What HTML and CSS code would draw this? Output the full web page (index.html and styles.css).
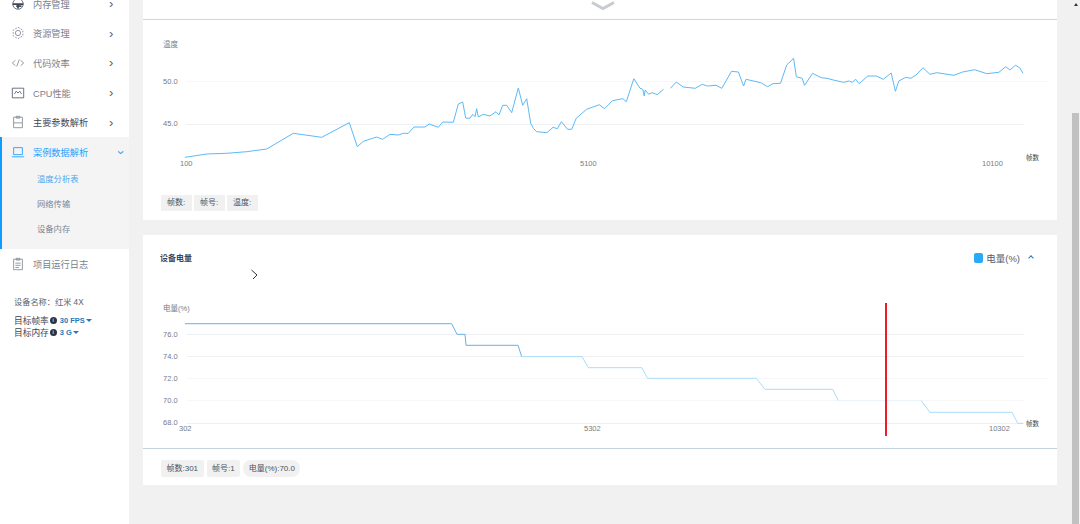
FILE: index.html
```html
<!DOCTYPE html>
<html lang="zh-CN">
<head>
    <meta charset="UTF-8">
    <title>性能报告</title>
    <link rel="stylesheet" href="styles.css">
</head>
<body>
    <div class="app">
        <aside class="sidebar">
            <nav class="nav">
                <div class="nav-item">
                    <svg class="nav-icon" viewBox="0 0 16 16"><circle cx="8" cy="8" r="6"/><path class="icon-bold" d="M2 8h12M6 10.500h6M8 8v5"/></svg>
                    <span class="nav-label">内存管理</span><span class="nav-arrow">›</span>
                </div>
                <div class="nav-item">
                    <svg class="nav-icon nav-icon-light" viewBox="0 0 16 16"><circle cx="8" cy="8" r="3"/><path stroke-dasharray="2 1.500" d="M8 1.500l5.500 3.200v6.600L8 14.500l-5.500-3.200V4.700z"/></svg>
                    <span class="nav-label">资源管理</span><span class="nav-arrow">›</span>
                </div>
                <div class="nav-item">
                    <svg class="nav-icon nav-icon-light" viewBox="0 0 16 16"><path d="M5 5L1.500 8 5 11M11 5l3.500 3L11 11M9.500 4l-3 8"/></svg>
                    <span class="nav-label">代码效率</span><span class="nav-arrow">›</span>
                </div>
                <div class="nav-item">
                    <svg class="nav-icon" viewBox="0 0 16 16"><path d="M1.500 2.500h13v11h-13zM4 9l2-3 2 2 2-2 2 3"/></svg>
                    <span class="nav-label">CPU性能</span><span class="nav-arrow">›</span>
                </div>
                <div class="nav-item">
                    <svg class="nav-icon nav-icon-light" viewBox="0 0 16 16"><path d="M3 2.500h10v12H3zM6 1.500h4v2H6zM3 9h10"/></svg>
                    <span class="nav-label nav-label-dark">主要参数解析</span><span class="nav-arrow">›</span>
                </div>
                <div class="nav-group">
                    <div class="nav-item nav-item-active">
                        <svg class="nav-icon" viewBox="0 0 16 16"><path d="M3 3h10v8H3zM1 13.500h14"/></svg>
                        <span class="nav-label">案例数据解析</span><span class="nav-arrow nav-arrow-open">›</span>
                    </div>
                    <div class="nav-sub nav-sub-active">温度分析表</div>
                    <div class="nav-sub">网络传输</div>
                    <div class="nav-sub">设备内存</div>
                </div>
                <div class="nav-item">
                    <svg class="nav-icon nav-icon-light" viewBox="0 0 16 16"><path d="M3 2.500h10v12H3zM6 1.500h4v2H6zM5 7h6M5 9.500h6M5 12h4"/></svg>
                    <span class="nav-label">项目运行日志</span>
                </div>
            </nav>
            <div class="device">
                <div class="device-name">设备名称：红米 4X</div>
                <div class="device-row">目标帧率<span class="info">i</span><span class="device-value">30 FPS</span><span class="caret"></span></div>
                <div class="device-row">目标内存<span class="info">i</span><span class="device-value">3 G</span><span class="caret"></span></div>
            </div>
        </aside>

        <main class="main">
            <section class="card card-first">
                <div class="card-top">
                    <svg class="chevron" viewBox="0 0 26 10"><path d="M2 1.500l11 6 11-6"/></svg>
                </div>
                <svg class="chart chart-temp" viewBox="0 0 914 170">
                    <g transform="translate(-143,-20)">
                        <path class="grid grid-faint" d="M186 81.500H1047"/>
                        <path class="grid" d="M186 124.500H1024"/>
                        <text class="axis" x="163" y="47">温度</text>
                        <text class="axis" x="163" y="84">50.0</text>
                        <text class="axis" x="163" y="126">45.0</text>
                        <text class="axis" x="180" y="166">100</text>
                        <text class="axis" x="580" y="166">5100</text>
                        <text class="axis" x="982" y="166">10100</text>
                        <text class="axis axis-end" x="1026" y="160">帧数</text>
                        <polyline class="line" points="185,157.300 206.700,154 226.700,153.300 246.700,151.700 266.700,149 293.300,133.300 321.700,137.300 349.300,122.700 357.300,146.700 363.300,141.300 376.700,137 382.700,139.300 390,134.300 398.300,135 403.300,133.300 408.300,133.300 414,127 425,127 429.300,124 438.300,127.300 442.700,122 453.300,122.300 458.300,104 462.700,102 465.700,118 470,118.300 472.700,114.300 475,116.700 476.700,108.700 478.300,117 483.300,114.300 490,116 496,111.700 499,115 502.700,105.300 506.700,105.300 511.700,112.700 518.300,88 522.700,105.300 526.700,98.700 530.700,123.300 533.300,128.300 536.700,131.700 540,132 546.900,132.700 553.100,127.300 557.300,128.700 561.400,121.700 567.600,129.300 571.700,129.300 576.200,118.300 586.600,109.300 599.300,104.700 604.500,108.700 612.500,100.700 622.800,98.700 626.300,101.700 633.800,78.700 640,88.300 642.800,89.300 644.200,96 645.200,90 648.700,94.300 652.100,92.700 657.300,94.700 663.500,89.300"/>
                        <polyline class="line" points="670.400,88.300 676.300,82 683.200,87 695.300,88.300 702.200,84.300 707.300,86 716,85.300 721.800,88.300 731.500,71.300 738.400,72 743.600,86 746,79.300 760.800,82.700 767.700,86.700 772.900,83.700 780.500,83.300 786.700,65 793.600,58.300 796.300,76.700 802.200,78.300 804.600,85.300 812.600,73.300 821.200,77.700 827,78.300 833.300,80 843.600,82.300 848.800,81 852.200,82.300 855.700,79.300 859.100,83.700 867.800,76 876.400,76 883.300,79.300 891.200,73 895.400,91.300 898.800,81 905.700,77.300 910.900,78.300 916,75 923,67.700 929.900,74.300 936.800,72.700 954,75.300 962.600,72 974.700,69.700 986.800,73.700 998.900,72.300 1005.800,66.700 1009.900,70 1015.400,65.300 1019.600,67.700 1023,73.300"/>
                    </g>
                </svg>
                <div class="chips chips-temp">
                    <span class="chip chip-temp">帧数:</span>
                    <span class="chip chip-temp">帧号:</span>
                    <span class="chip chip-temp">温度:</span>
                </div>
            </section>

            <section class="card card-battery">
                <header class="card-head">
                    <h2 class="card-title">设备电量</h2>
                    <div class="legend">
                        <span class="legend-box"></span>
                        <span class="legend-label">电量(%)</span>
                        <span class="legend-caret"></span>
                    </div>
                </header>
                <div class="chart-wrap">
                    <svg class="chart chart-battery" viewBox="0 0 914 158">
                        <g transform="translate(-143,-290)">
                            <path class="grid" d="M187 334.500H1024M187 356.500H1024M187 423.500H1024"/>
                            <path class="grid grid-faint" d="M187 378.500H1047M187 400.500H1024"/>
                            <text class="axis" x="163" y="311">电量(%)</text>
                            <text class="axis" x="163" y="337">76.0</text>
                            <text class="axis" x="163" y="359">74.0</text>
                            <text class="axis" x="163" y="381">72.0</text>
                            <text class="axis" x="163" y="403">70.0</text>
                            <text class="axis" x="163" y="425">68.0</text>
                            <text class="axis" x="179" y="431">302</text>
                            <text class="axis" x="584" y="431">5302</text>
                            <text class="axis" x="989" y="431">10302</text>
                            <text class="axis axis-end" x="1026" y="426">帧数</text>
                            <polyline class="line line-strong" points="185,323.700 451.700,323.700 457,334.300 465,334.300 466,345.300 518,345.300 521.700,356.700"/>
                            <polyline class="line line-soft" points="521.700,356.700 582.100,356.700 588.300,367.700 641.800,367.700 647.600,378.300 756.300,378.300 764.900,389.300 832.600,389.300 838.400,400.700"/>
                            <polyline class="line line-pale" points="838.400,400.700 921.200,400.700"/>
                            <polyline class="line line-soft" points="921.200,400.700 929.900,412.300 1012,412.300 1017.800,423.300 1023,423.300"/>
                        </g>
                    </svg>
                </div>
                <div class="chips chips-battery">
                    <span class="chip">帧数:301</span>
                    <span class="chip">帧号:1</span>
                    <span class="chip chip-round">电量(%):70.0</span>
                </div>
            </section>

            <div class="marker"></div>
            <svg class="cursor" viewBox="0 0 8 12"><path d="M1.500 2L7 7l-4 4"/></svg>
        </main>

        <div class="scrollbar">
            <span class="scroll-up"></span>
            <div class="scroll-thumb"></div>
        </div>
    </div>
</body>
</html>
```

FILE: styles.css
```css
* {
    box-sizing: border-box;
}
html, body {
    margin: 0;
    height: 100%;
    overflow: hidden;
}
body {
    font-family: "Liberation Sans", "Noto Sans CJK SC", sans-serif;
    background: #f1f1f1;
    color: #4a5160;
}
.app {
    display: flex;
    height: 524px;
    overflow: hidden;
}

/* sidebar */
.sidebar {
    width: 129px;
    flex-shrink: 0;
    background: #fff;
}
.nav {
    margin-top: -11px;
}
.nav-item {
    display: flex;
    align-items: center;
    height: 29.6px;
    padding-left: 11px;
    font-size: 9.200px;
    color: #7a818e;
}
.nav-icon {
    width: 14px;
    height: 14px;
    margin-right: 8px;
    flex-shrink: 0;
    fill: none;
    stroke: #59616f;
    stroke-width: 1;
}
.nav-icon-light {
    stroke: #868d99;
}
.icon-bold {
    stroke-width: 2;
    stroke: #3f4656;
}
.nav-label {
    flex: 1;
    white-space: nowrap;
}
.nav-label-dark {
    color: #3f4656;
}
.nav-arrow {
    width: 20px;
    font-size: 13px;
    line-height: 1;
    color: #59616f;
}
.nav-arrow-open {
    color: #1e9fff;
    transform: rotate(90deg) translateY(-8px);
    width: 8px;
    margin-right: 12px;
    text-align: center;
}
.nav-group {
    height: 112px;
    background: #f4f4f4;
    border-left: 2px solid #0f9bff;
}
.nav-group .nav-item {
    padding-left: 9px;
    height: 30.5px;
}
.nav-item-active {
    color: #1e9fff;
}
.nav-item-active .nav-icon {
    stroke: #1e9fff;
}
.nav-sub {
    height: 25px;
    line-height: 25px;
    padding-left: 35px;
    font-size: 8.300px;
    color: #7c8593;
}
.nav-sub-active {
    color: #4aa8f0;
}
.device {
    margin-top: 15px;
    padding-left: 14px;
    font-size: 8.700px;
    color: #3f4656;
}
.device-name {
    height: 18px;
    line-height: 18px;
    margin-bottom: 3px;
    font-size: 8.200px;
    color: #5b6270;
}
.device-row {
    display: flex;
    align-items: center;
    height: 12px;
    white-space: nowrap;
}
.info {
    width: 7px;
    height: 7px;
    margin-left: 1px;
    border-radius: 50%;
    background: #2c3340;
    color: #fff;
    font-size: 6px;
    line-height: 7px;
    text-align: center;
}
.device-value {
    margin-left: 3px;
    font-size: 7.500px;
    font-weight: bold;
    color: #2f75b5;
}
.caret {
    margin-left: 1px;
    border-left: 3px solid transparent;
    border-right: 3px solid transparent;
    border-top: 3px solid #2f75b5;
}

/* main column */
.main {
    position: relative;
    flex: 1;
    padding: 0 15px 0 14px;
}
.card {
    background: #fff;
}
.card-first {
    margin-top: -10px;
    height: 230px;
}
.card-top {
    display: flex;
    justify-content: center;
    height: 30px;
    padding-top: 11px;
    padding-left: 6px;
    border-bottom: 1px solid #d0d4de;
}
.chevron {
    width: 26px;
    height: 10px;
    fill: none;
    stroke: #c8ccd2;
    stroke-width: 3;
}
.chart {
    display: block;
    width: 914px;
}
.chart-temp {
    height: 170px;
}
.chart-battery {
    height: 158px;
}
.grid {
    fill: none;
    stroke: #eef0f4;
    stroke-width: 1;
}
.grid-faint {
    stroke: #f7f7f9;
}
.axis {
    font-size: 7.500px;
    fill: #777c85;
}
.axis-end {
    font-size: 6.500px;
    fill: #444;
}
.line {
    fill: none;
    stroke: #5cbaf7;
    stroke-width: 1;
}
.line-strong {
    stroke: #62b3ee;
}
.line-soft {
    stroke: #a9dcfa;
}
.line-pale {
    stroke: #e8f4fc;
}
.chips {
    display: flex;
    padding-left: 18px;
}
.chips-temp {
    gap: 2px;
    margin-top: 5px;
}
.chips-battery {
    gap: 3px;
    margin-top: 11px;
}
.chip {
    height: 17px;
    line-height: 17px;
    padding: 0 5.500px;
    font-size: 8px;
    white-space: nowrap;
    background: #f1f1f1;
    border-radius: 2px;
    color: #4a5160;
}
.chip-temp {
    width: 31px;
    height: 16px;
    line-height: 16px;
    padding: 0 6px;
    border-radius: 0;
}
.chip-round {
    border-radius: 8px;
}
.card-battery {
    margin-top: 15px;
    height: 250px;
}
.card-head {
    display: flex;
    justify-content: space-between;
    height: 55px;
    padding: 17px 24px 0 17px;
}
.card-title {
    margin: 0;
    font-size: 8px;
    line-height: 14px;
    color: #3c4456;
}
.legend {
    display: flex;
    align-items: center;
    height: 12px;
}
.legend-box {
    width: 9px;
    height: 10px;
    border-radius: 2px;
    background: #2aa9f7;
}
.legend-label {
    margin-left: 3px;
    font-size: 9.500px;
    color: #555c6a;
}
.legend-caret {
    width: 4px;
    height: 4px;
    margin-left: 9px;
    border-top: 1px solid #2f75b5;
    border-left: 1px solid #2f75b5;
    transform: rotate(45deg);
}
.chart-wrap {
    height: 159px;
    border-bottom: 1px solid #c3d3e0;
}

/* things lying over the charts */
.marker {
    position: absolute;
    left: 756px;
    top: 303px;
    width: 2px;
    height: 133px;
    background: #ee1c25;
}
.cursor {
    position: absolute;
    left: 121px;
    top: 268px;
    width: 8px;
    height: 12px;
    fill: none;
    stroke: #333;
    stroke-width: 1;
}

/* page scrollbar */
.scrollbar {
    position: relative;
    width: 8px;
    flex-shrink: 0;
    margin-right: 1px;
    padding-top: 113px;
}
.scroll-up {
    position: absolute;
    top: 3px;
    left: 2px;
    border-left: 2px solid transparent;
    border-right: 2px solid transparent;
    border-bottom: 3px solid #333;
}
.scroll-thumb {
    width: 7px;
    height: 411px;
    background: #c1c1c1;
}
```
